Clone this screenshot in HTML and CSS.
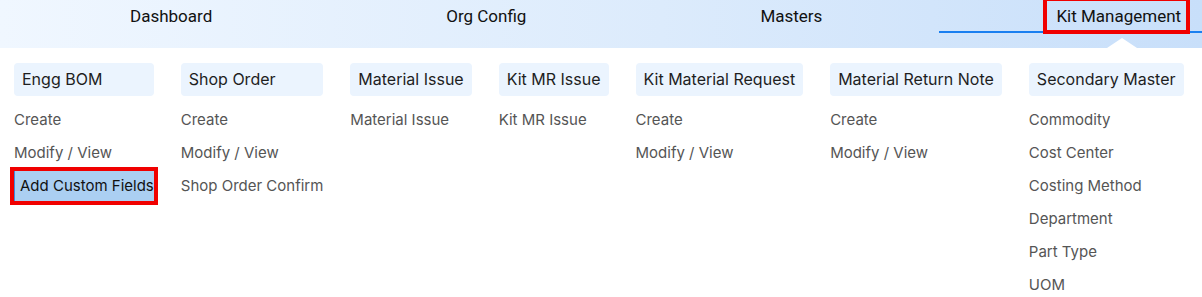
FILE: index.html
```html
<!DOCTYPE html>
<html lang="en">
<head>
  <meta charset="UTF-8" />
  <meta name="viewport" content="width=device-width, initial-scale=1.0"/>
  <title>Kit Management</title>
  <link rel="stylesheet" href="styles.css">
</head>
<body>

  <div class="top-bar">
    <div class="nav-item">Dashboard</div>
    <div class="nav-item">Org Config</div>
    <div class="nav-item">Masters</div>
    <div class="nav-item active"><span class="mark">Kit Management</span></div>
  </div>

  <div class="menu-panel">
    <div class="menu-col">
      <div class="menu-head">Engg BOM</div>
      <div class="menu-link">Create</div>
      <div class="menu-link">Modify / View</div>
      <div class="menu-link selected">Add Custom Fields</div>
    </div>
    <div class="menu-col">
      <div class="menu-head">Shop Order</div>
      <div class="menu-link">Create</div>
      <div class="menu-link">Modify / View</div>
      <div class="menu-link">Shop Order Confirm</div>
    </div>
    <div class="menu-col">
      <div class="menu-head">Material Issue</div>
      <div class="menu-link">Material Issue</div>
    </div>
    <div class="menu-col">
      <div class="menu-head">Kit MR Issue</div>
      <div class="menu-link">Kit MR Issue</div>
    </div>
    <div class="menu-col">
      <div class="menu-head">Kit Material Request</div>
      <div class="menu-link">Create</div>
      <div class="menu-link">Modify / View</div>
    </div>
    <div class="menu-col">
      <div class="menu-head">Material Return Note</div>
      <div class="menu-link">Create</div>
      <div class="menu-link">Modify / View</div>
    </div>
    <div class="menu-col">
      <div class="menu-head">Secondary Master</div>
      <div class="menu-link">Commodity</div>
      <div class="menu-link">Cost Center</div>
      <div class="menu-link">Costing Method</div>
      <div class="menu-link">Department</div>
      <div class="menu-link">Part Type</div>
      <div class="menu-link">UOM</div>
    </div>
  </div>

</body>
</html>
```

FILE: styles.css
```css
html, body {
  margin: 0;
  overflow: hidden;
  background: #ffffff;
}

body {
  font-family: Inter, "Noto Sans", sans-serif;
}

.top-bar {
  display: flex;
  height: 48px;
  padding-left: 13px;
  background: linear-gradient(90deg, #f0f7ff 0%, #dcebfc 55%, #c8dffa 100%);
  font-family: Roboto, "Liberation Sans", sans-serif;
  font-size: 17px;
  color: #111;
  box-sizing: border-box;
}

.nav-item {
  position: relative;
  flex-shrink: 0;
  height: 33px;
  padding: 6px 117px 0;
  line-height: 20px;
  box-sizing: border-box;
  white-space: nowrap;
}

.nav-item.active {
  border-bottom: 2px solid #1a7ff0;
}

.nav-item.active::after {
  content: "";
  position: absolute;
  left: 50%;
  bottom: -17px;
  margin-left: -12px;
  border-left: 15px solid transparent;
  border-right: 15px solid transparent;
  border-bottom: 10px solid #ffffff;
}

.mark {
  position: relative;
}

.mark::before {
  content: "";
  position: absolute;
  left: -13px;
  right: -9px;
  top: -9px;
  bottom: -8px;
  border: 4px solid #f00000;
  z-index: 1;
}

.menu-panel {
  display: flex;
  align-items: flex-start;
  gap: 27px;
  padding: 15px 14px 0;
}

.menu-col {
  display: flex;
  flex-direction: column;
  gap: 3px;
  flex-shrink: 0;
}

.menu-head {
  height: 33px;
  line-height: 33px;
  padding: 0 8px;
  margin-bottom: 6px;
  background: #ebf4fe;
  border-radius: 4px;
  font-size: 16px;
  color: #1e1e1e;
  white-space: nowrap;
}

.menu-link {
  height: 30px;
  line-height: 30px;
  font-size: 15px;
  color: #555;
  white-space: nowrap;
}

.menu-link.selected {
  padding-left: 5px;
  background: #abcff2;
  border-left: 1px solid #3d8be0;
  outline: 4px solid #f00000;
  color: #111;
}
```
